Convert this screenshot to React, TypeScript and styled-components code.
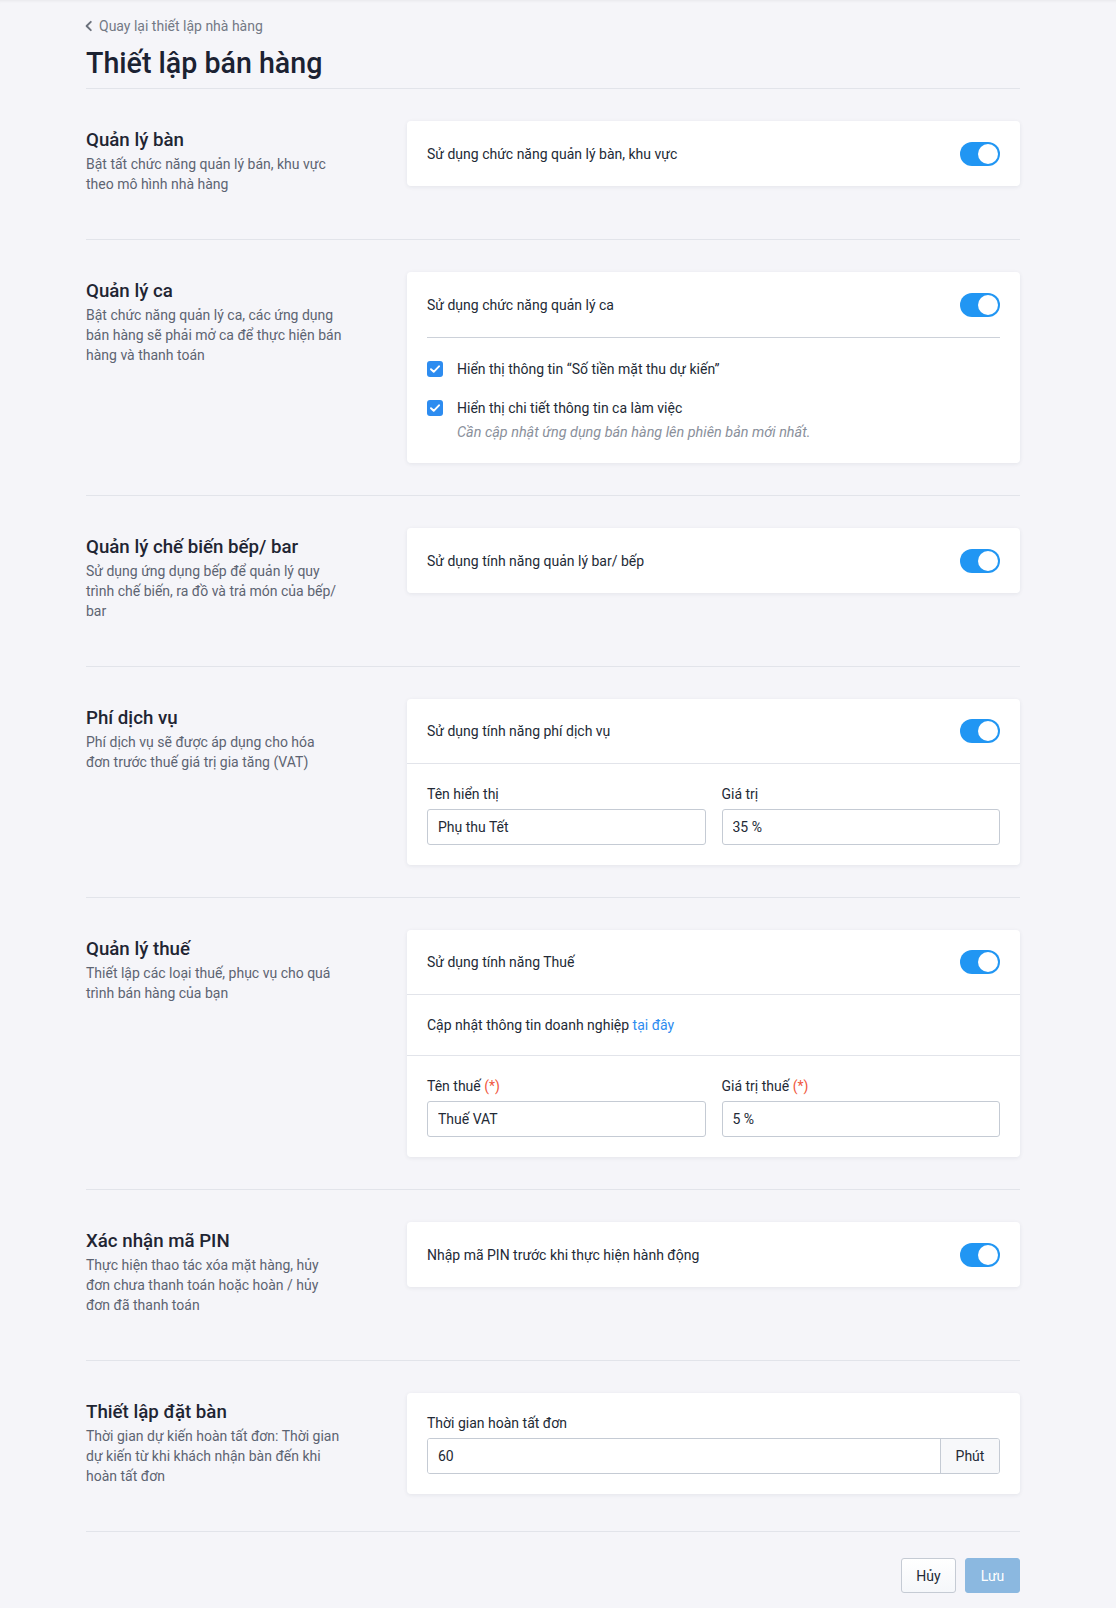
import React from "react";
import styled, { createGlobalStyle } from "styled-components";

const GlobalStyle = createGlobalStyle`
  * { box-sizing: border-box; }
  html, body { margin: 0; padding: 0; }
  body {
    background: #f5f5f9;
    font-family: Roboto, "Noto Sans", sans-serif;
    color: #232a36;
    font-size: 14px;
  }
`;

const Page = styled.div`
  min-height: 1608px;
  padding: 0 96px 16px 86px;
  box-shadow: inset 0 3px 3px -2px rgba(0, 0, 0, 0.06);
`;

const Header = styled.header`
  padding: 16px 0 8px;
  border-bottom: 1px solid #e2e4ea;
`;

const BackLink = styled.a`
  display: inline-flex;
  align-items: center;
  gap: 4px;
  font-size: 14px;
  line-height: 20px;
  color: #737985;
  text-decoration: none;
  margin-left: -3px;
  cursor: pointer;
`;

const PageTitle = styled.h1`
  margin: 10px 0 0;
  font-size: 28.6px;
  line-height: 34px;
  font-weight: 500;
  color: #1b2232;
`;

const Section = styled.section`
  display: grid;
  grid-template-columns: 291px 613px;
  column-gap: 30px;
  align-items: start;
  padding: 32px 0;
  border-bottom: 1px solid #e2e4ea;
`;

const Intro = styled.div`
  display: flex;
  flex-direction: column;
`;

const SectionTitle = styled.h3`
  margin: 6px 0 0;
  font-size: 18.7px;
  line-height: 27px;
  font-weight: 500;
  color: #1f2533;
`;

const SectionDesc = styled.p`
  margin: 0 0 13px;
  max-width: 256px;
  font-size: 14px;
  line-height: 20px;
  color: #5d6472;
`;

const Card = styled.div`
  background: #ffffff;
  border-radius: 4px;
  box-shadow: 0 1px 4px rgba(30, 40, 60, 0.08);
`;

const CardPad = styled.div`
  padding: 20px;
`;

const ToggleRow = styled.div<{ $bordered?: boolean }>`
  display: flex;
  align-items: center;
  justify-content: space-between;
  padding: 20px;
  min-height: 65px;
  ${(p) => (p.$bordered ? "border-bottom: 1px solid #e2e4ea;" : "")}
`;

const ToggleRowInner = styled.div`
  display: flex;
  align-items: center;
  justify-content: space-between;
  height: 25px;
`;

const RowText = styled.span`
  font-size: 14px;
  line-height: 20px;
  color: #232a36;
`;

const SwitchTrack = styled.span<{ $on: boolean }>`
  position: relative;
  display: inline-block;
  width: 40px;
  height: 24px;
  border-radius: 12px;
  background: ${(p) => (p.$on ? "#2196f3" : "#c9ced6")};
  flex-shrink: 0;
`;

const SwitchKnob = styled.span<{ $on: boolean }>`
  position: absolute;
  top: 2px;
  left: ${(p) => (p.$on ? "18px" : "2px")};
  width: 20px;
  height: 20px;
  border-radius: 50%;
  background: #ffffff;
`;

const InsetDivider = styled.div`
  height: 1px;
  background: #ccd1d9;
  margin: 20px 0 21px;
`;

const CheckList = styled.div`
  display: flex;
  flex-direction: column;
  gap: 19px;
`;

const CheckItem = styled.label`
  display: flex;
  align-items: flex-start;
  gap: 14px;
  font-size: 14px;
  line-height: 20px;
  color: #232a36;
`;

const CheckBox = styled.span`
  width: 16px;
  height: 16px;
  margin-top: 2px;
  border-radius: 3px;
  background: #2d8cf0;
  display: inline-flex;
  align-items: center;
  justify-content: center;
  flex-shrink: 0;
`;

const CheckBody = styled.div`
  display: flex;
  flex-direction: column;
  gap: 5px;
`;

const Note = styled.span`
  font-size: 14.4px;
  line-height: 20px;
  font-style: italic;
  color: #8a909b;
`;

const InfoRow = styled.div`
  padding: 20px;
  font-size: 14px;
  line-height: 20px;
  border-bottom: 1px solid #e2e4ea;
`;

const Link = styled.a`
  color: #2d8cf0;
  text-decoration: none;
  cursor: pointer;
`;

const FieldGrid = styled.div<{ $cols: number }>`
  display: grid;
  grid-template-columns: repeat(${(p) => p.$cols}, 1fr);
  column-gap: 16px;
`;

const Field = styled.div`
  display: flex;
  flex-direction: column;
  gap: 5px;
`;

const Label = styled.label`
  font-size: 14px;
  line-height: 20px;
  color: #232a36;
`;

const Required = styled.span`
  color: #f0573e;
`;

const TextInput = styled.input`
  height: 36px;
  width: 100%;
  padding: 0 10px;
  border: 1px solid #c5cbd4;
  border-radius: 3px;
  font-family: inherit;
  font-size: 14px;
  color: #232a36;
  background: #fff;
  outline: none;
`;

const InputGroup = styled.div`
  display: flex;
  height: 36px;
  border: 1px solid #c5cbd4;
  border-radius: 3px;
  overflow: hidden;
`;

const GroupInput = styled.input`
  flex: 1;
  min-width: 0;
  border: none;
  padding: 0 10px;
  font-family: inherit;
  font-size: 14px;
  color: #232a36;
  outline: none;
`;

const Addon = styled.span`
  width: 59px;
  display: flex;
  align-items: center;
  justify-content: center;
  border-left: 1px solid #c5cbd4;
  background: #f7f8fa;
  font-size: 14px;
  color: #232a36;
`;

const Footer = styled.div`
  display: flex;
  justify-content: flex-end;
  gap: 9px;
  padding-top: 26px;
`;

const Button = styled.button<{ $primary?: boolean }>`
  height: 35px;
  min-width: 55px;
  padding: 0 14px;
  border-radius: 3px;
  font-family: inherit;
  font-size: 14px;
  cursor: pointer;
  border: 1px solid ${(p) => (p.$primary ? "#8bb8e0" : "#c5cbd4")};
  background: ${(p) =>
    p.$primary ? "#8bb8e0" : "linear-gradient(#ffffff, #f5f7fa)"};
  color: ${(p) => (p.$primary ? "#ffffff" : "#232a36")};
`;

const Switch: React.FC<{ on?: boolean }> = ({ on = true }) => (
  <SwitchTrack $on={on}>
    <SwitchKnob $on={on} />
  </SwitchTrack>
);

const Check: React.FC = () => (
  <CheckBox>
    <svg width="10" height="8" viewBox="0 0 10 8" fill="none">
      <path
        d="M1 4.2L3.7 6.8L9 1.3"
        stroke="#fff"
        strokeWidth="1.9"
        strokeLinecap="round"
        strokeLinejoin="round"
      />
    </svg>
  </CheckBox>
);

const Chevron: React.FC = () => (
  <svg width="12" height="12" viewBox="0 0 12 12" fill="none">
    <path
      d="M7.8 1.8L3.6 6l4.2 4.2"
      stroke="#6b717c"
      strokeWidth="1.9"
      strokeLinecap="round"
      strokeLinejoin="round"
    />
  </svg>
);

const SectionIntro: React.FC<{ title: string; desc: string }> = ({ title, desc }) => (
  <Intro>
    <SectionTitle>{title}</SectionTitle>
    <SectionDesc>{desc}</SectionDesc>
  </Intro>
);

export default function App() {
  return (
    <>
      <GlobalStyle />
      <Page>
        <Header>
          <BackLink>
            <Chevron />
            Quay lại thiết lập nhà hàng
          </BackLink>
          <PageTitle>Thiết lập bán hàng</PageTitle>
        </Header>

        <Section>
          <SectionIntro
            title="Quản lý bàn"
            desc="Bật tất chức năng quản lý bán, khu vực theo mô hình nhà hàng"
          />
          <Card>
            <ToggleRow>
              <RowText>Sử dụng chức năng quản lý bàn, khu vực</RowText>
              <Switch />
            </ToggleRow>
          </Card>
        </Section>

        <Section>
          <SectionIntro
            title="Quản lý ca"
            desc="Bật chức năng quản lý ca, các ứng dụng bán hàng sẽ phải mở ca để thực hiện bán hàng và thanh toán"
          />
          <Card>
            <CardPad>
              <ToggleRowInner>
                <RowText>Sử dụng chức năng quản lý ca</RowText>
                <Switch />
              </ToggleRowInner>
              <InsetDivider />
              <CheckList>
                <CheckItem>
                  <Check />
                  <span>Hiển thị thông tin “Số tiền mặt thu dự kiến”</span>
                </CheckItem>
                <CheckItem>
                  <Check />
                  <CheckBody>
                    <span>Hiển thị chi tiết thông tin ca làm việc</span>
                    <Note>Cần cập nhật ứng dụng bán hàng lên phiên bản mới nhất.</Note>
                  </CheckBody>
                </CheckItem>
              </CheckList>
            </CardPad>
          </Card>
        </Section>

        <Section>
          <SectionIntro
            title="Quản lý chế biến bếp/ bar"
            desc="Sử dụng ứng dụng bếp để quản lý quy trình chế biến, ra đồ và trả món của bếp/ bar"
          />
          <Card>
            <ToggleRow>
              <RowText>Sử dụng tính năng quản lý bar/ bếp</RowText>
              <Switch />
            </ToggleRow>
          </Card>
        </Section>

        <Section>
          <SectionIntro
            title="Phí dịch vụ"
            desc="Phí dịch vụ sẽ được áp dụng cho hóa đơn trước thuế giá trị gia tăng (VAT)"
          />
          <Card>
            <ToggleRow $bordered>
              <RowText>Sử dụng tính năng phí dịch vụ</RowText>
              <Switch />
            </ToggleRow>
            <CardPad>
              <FieldGrid $cols={2}>
                <Field>
                  <Label>Tên hiển thị</Label>
                  <TextInput defaultValue="Phụ thu Tết" />
                </Field>
                <Field>
                  <Label>Giá trị</Label>
                  <TextInput defaultValue="35 %" />
                </Field>
              </FieldGrid>
            </CardPad>
          </Card>
        </Section>

        <Section>
          <SectionIntro
            title="Quản lý thuế"
            desc="Thiết lập các loại thuế, phục vụ cho quá trình bán hàng của bạn"
          />
          <Card>
            <ToggleRow $bordered>
              <RowText>Sử dụng tính năng Thuế</RowText>
              <Switch />
            </ToggleRow>
            <InfoRow>
              Cập nhật thông tin doanh nghiệp <Link>tại đây</Link>
            </InfoRow>
            <CardPad>
              <FieldGrid $cols={2}>
                <Field>
                  <Label>
                    Tên thuế <Required>(*)</Required>
                  </Label>
                  <TextInput defaultValue="Thuế VAT" />
                </Field>
                <Field>
                  <Label>
                    Giá trị thuế <Required>(*)</Required>
                  </Label>
                  <TextInput defaultValue="5 %" />
                </Field>
              </FieldGrid>
            </CardPad>
          </Card>
        </Section>

        <Section>
          <SectionIntro
            title="Xác nhận mã PIN"
            desc="Thực hiện thao tác xóa mặt hàng, hủy đơn chưa thanh toán hoặc hoàn / hủy đơn đã thanh toán"
          />
          <Card>
            <ToggleRow>
              <RowText>Nhập mã PIN trước khi thực hiện hành động</RowText>
              <Switch />
            </ToggleRow>
          </Card>
        </Section>

        <Section>
          <SectionIntro
            title="Thiết lập đặt bàn"
            desc="Thời gian dự kiến hoàn tất đơn: Thời gian dự kiến từ khi khách nhận bàn đến khi hoàn tất đơn"
          />
          <Card>
            <CardPad>
              <Field>
                <Label>Thời gian hoàn tất đơn</Label>
                <InputGroup>
                  <GroupInput defaultValue="60" />
                  <Addon>Phút</Addon>
                </InputGroup>
              </Field>
            </CardPad>
          </Card>
        </Section>

        <Footer>
          <Button>Hủy</Button>
          <Button $primary>Lưu</Button>
        </Footer>
      </Page>
    </>
  );
}
